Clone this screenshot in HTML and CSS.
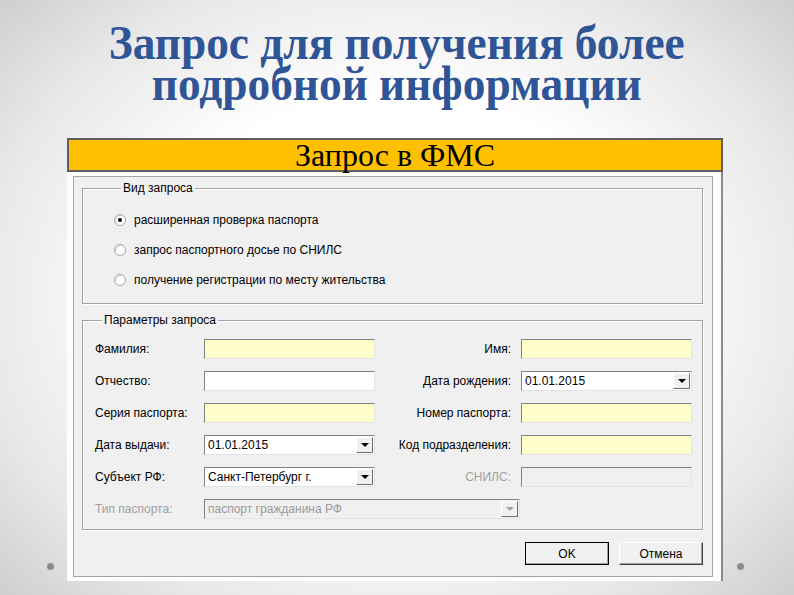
FILE: index.html
```html
<!DOCTYPE html>
<html lang="ru">
<head>
  <meta charset="UTF-8" />
  <title>Запрос для получения более подробной информации</title>
  <link rel="stylesheet" href="styles.css">
</head>
<body>
  <div class="slide">
    <h1 class="title"><span>Запрос для получения более<br>подробной информации</span></h1>

    <div class="panel">
      <div class="banner">Запрос в ФМС</div>

      <div class="dialog">
        <div class="form">
          <fieldset class="group kind">
            <legend>Вид запроса</legend>
            <label class="radio"><span class="dot checked"></span>расширенная проверка паспорта</label>
            <label class="radio"><span class="dot"></span>запрос паспортного досье по СНИЛС</label>
            <label class="radio"><span class="dot"></span>получение регистрации по месту жительства</label>
          </fieldset>

          <fieldset class="group params">
            <legend>Параметры запроса</legend>
            <div class="grid">
              <span class="lbl">Фамилия:</span>
              <span class="field req"></span>
              <span class="lbl right">Имя:</span>
              <span class="field req"></span>

              <span class="lbl">Отчество:</span>
              <span class="field"></span>
              <span class="lbl right">Дата рождения:</span>
              <span class="field combo">01.01.2015<span class="arrow"></span></span>

              <span class="lbl">Серия паспорта:</span>
              <span class="field req"></span>
              <span class="lbl right">Номер паспорта:</span>
              <span class="field req"></span>

              <span class="lbl">Дата выдачи:</span>
              <span class="field combo">01.01.2015<span class="arrow"></span></span>
              <span class="lbl right">Код подразделения:</span>
              <span class="field req"></span>

              <span class="lbl">Субъект РФ:</span>
              <span class="field combo">Санкт-Петербург г.<span class="arrow"></span></span>
              <span class="lbl right off">СНИЛС:</span>
              <span class="field disabled"></span>

              <span class="lbl off">Тип паспорта:</span>
              <span class="field combo disabled wide">паспорт гражданина РФ<span class="arrow"></span></span>
            </div>
          </fieldset>

          <div class="actions">
            <button class="btn default">OK</button>
            <button class="btn">Отмена</button>
          </div>
        </div>
      </div>
    </div>

    <span class="bullet left"></span>
    <span class="bullet right"></span>
  </div>
</body>
</html>
```

FILE: styles.css
```css
body {
  margin: 0;
  background: #d0d0d0;
}

.slide {
  position: relative;
  width: 794px;
  height: 595px;
  overflow: hidden;
  display: flex;
  flex-direction: column;
  background: radial-gradient(ellipse 70% 75% at 50% 50%, #ffffff 45%, #e8e8e8 75%, #cccccc 100%);
}

.title {
  margin: 0;
  padding-top: 22px;
  height: 120px;
  box-sizing: border-box;
  text-align: center;
  font-family: "Liberation Serif", "Times New Roman", serif;
  font-weight: bold;
  font-size: 48px;
  line-height: 41px;
  color: #2f5597;
}

.title span {
  display: inline-block;
  transform: scaleX(0.945);
}

.panel {
  margin-left: 67px;
  margin-top: 18px;
  width: 656px;
}

.banner {
  height: 34px;
  box-sizing: border-box;
  border: 2px solid #5e5e5e;
  background: #ffc000;
  text-align: center;
  font-family: "Liberation Serif", "Times New Roman", serif;
  font-size: 32px;
  line-height: 30px;
  color: #000;
}

.dialog {
  background: #fdfdfd;
  padding: 4px 8px 4px 6px;
  border-right: 2px solid #8a8a8a;
  width: 640px;
}

.form {
  background: #f0f0f0;
  border: 1px solid #a5a5a5;
  height: 401px;
  padding: 4px 9px 0 8px;
  box-sizing: border-box;
  font-family: "Liberation Sans", Arial, sans-serif;
  font-size: 12px;
  color: #000;
}

.group {
  margin: 0;
  border: 1px solid #a0a0a0;
  box-shadow: inset 1px 1px 0 #fff, 1px 1px 0 #fff;
  padding: 0;
}

.group legend {
  margin-left: 7px;
  padding: 0 2px;
  line-height: 14px;
}

.kind {
  height: 123px;
  padding: 10px 0 0 31px;
  box-sizing: border-box;
}

.radio {
  display: flex;
  align-items: center;
  height: 30px;
}

.dot {
  width: 12px;
  height: 12px;
  box-sizing: border-box;
  border-radius: 50%;
  border: 1px solid #a8a8a8;
  background: #fff;
  box-shadow: inset 1px 1px 1px #d8d8d8;
  margin-right: 8px;
  position: relative;
}

.dot.checked::after {
  content: "";
  position: absolute;
  left: 3px;
  top: 3px;
  width: 4px;
  height: 4px;
  border-radius: 50%;
  background: #000;
}

.params {
  margin-top: 9px;
  height: 217px;
  box-sizing: border-box;
  padding: 12px 0 0 12px;
}

.grid {
  display: grid;
  grid-template-columns: 109px 171px 146px 171px;
  grid-auto-rows: 20px;
  row-gap: 12px;
  align-items: center;
}

.lbl.right {
  text-align: right;
  padding-right: 10px;
}

.off {
  color: #a0a0a0;
}

.field {
  height: 20px;
  box-sizing: border-box;
  border: 1px solid;
  border-color: #828282 #e3e3e3 #e3e3e3 #828282;
  background: #fff;
  display: flex;
  align-items: center;
  padding-left: 3px;
  position: relative;
}

.field.req {
  background: #ffffcc;
}

.field.disabled {
  background: #f0f0f0;
  color: #9a9a9a;
}

.field.wide {
  grid-column: span 2;
  width: 316px;
}

.arrow {
  margin-left: auto;
  margin-right: 1px;
  width: 17px;
  height: 16px;
  box-sizing: border-box;
  border: 1px solid;
  border-color: #fff #6e6e6e #6e6e6e #fff;
  background: #f0f0f0;
  display: flex;
  align-items: center;
  justify-content: center;
}

.arrow::after {
  content: "";
  border-left: 4px solid transparent;
  border-right: 4px solid transparent;
  border-top: 4px solid #000;
}

.disabled .arrow::after {
  border-top-color: #a0a0a0;
}

.actions {
  display: flex;
  justify-content: flex-end;
  gap: 10px;
  margin-top: 12px;
}

.btn {
  width: 84px;
  height: 23px;
  font-family: "Liberation Sans", Arial, sans-serif;
  font-size: 12px;
  background: #f0f0f0;
  border: 1px solid;
  border-color: #fff #404040 #404040 #fff;
  box-shadow: inset -1px -1px 0 #a0a0a0;
  padding: 0;
}

.btn.default {
  outline: 1px solid #000;
  outline-offset: -1px;
}

.bullet {
  position: absolute;
  top: 563px;
  width: 7px;
  height: 7px;
  border-radius: 50%;
  background: #8c8c8c;
}

.bullet.left {
  left: 47px;
}

.bullet.right {
  left: 737px;
}
```
